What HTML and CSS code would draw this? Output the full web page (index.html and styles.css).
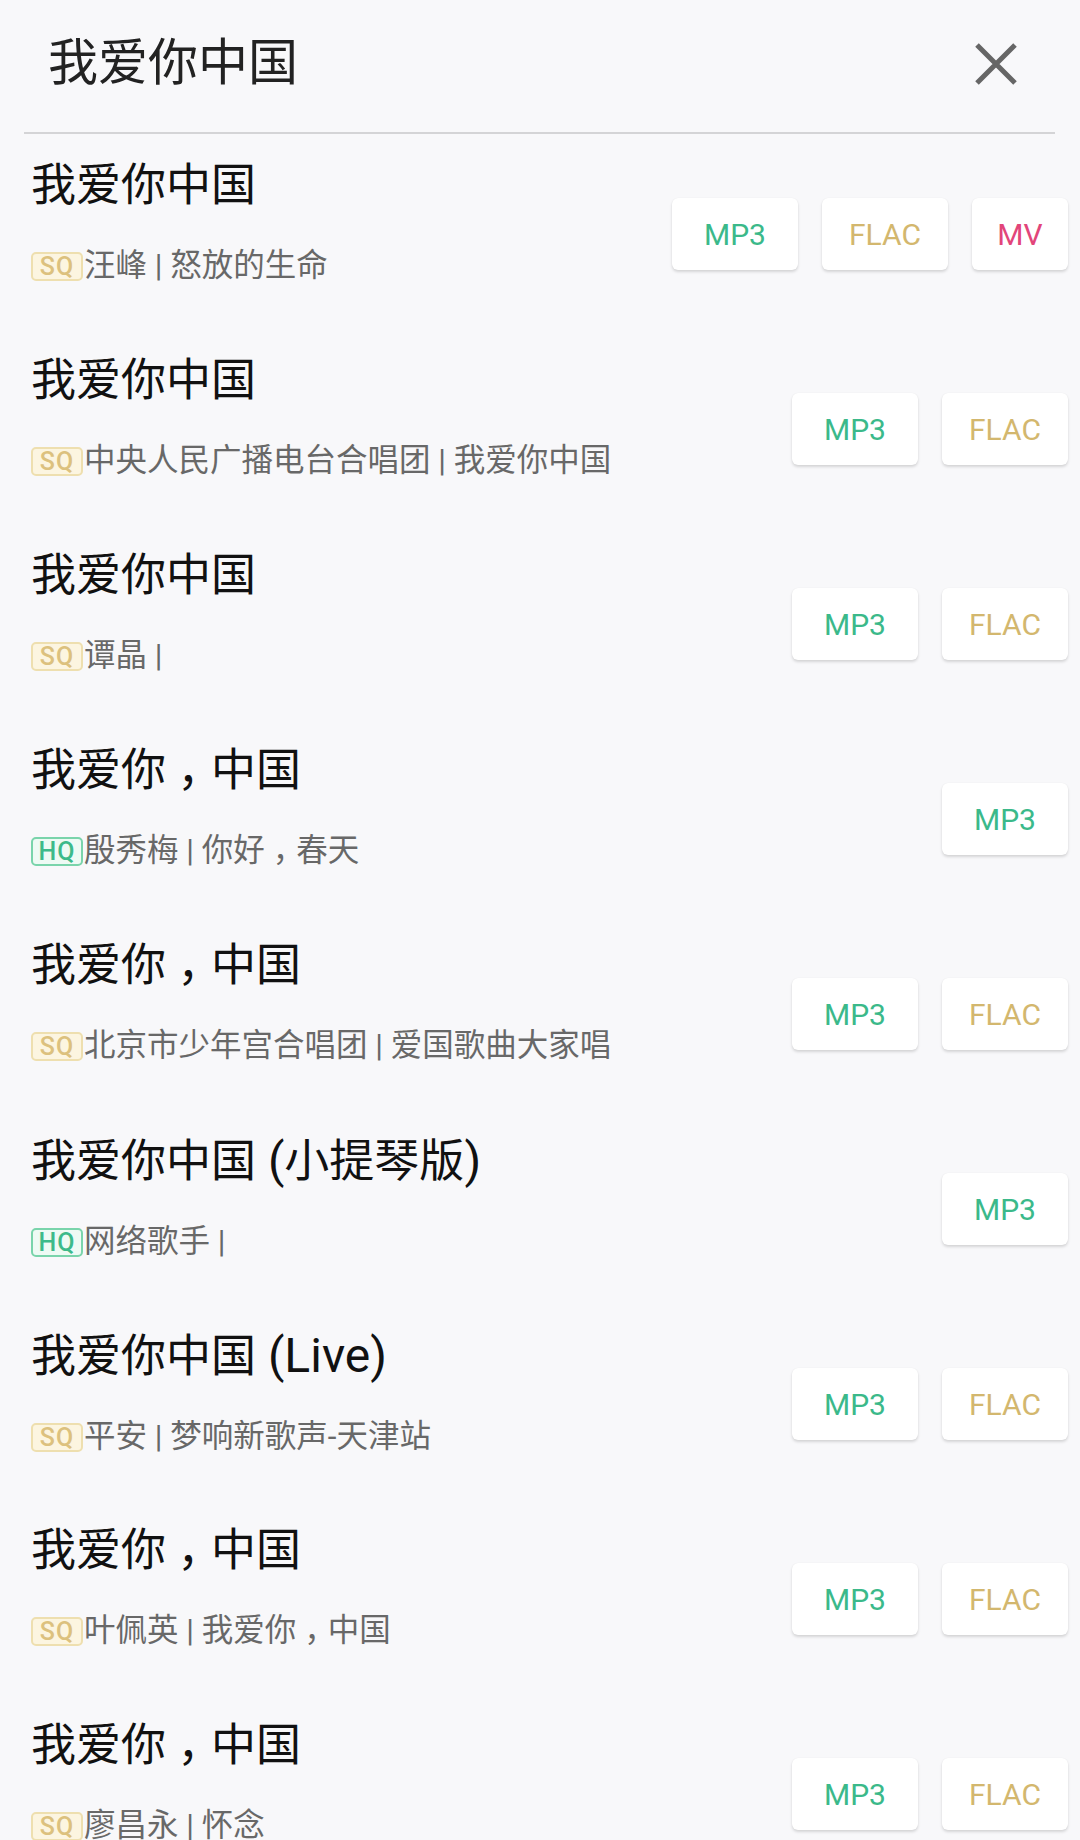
FILE: index.html
```html
<!DOCTYPE html>
<html lang="zh-CN">
<head>
<meta charset="utf-8">
<title>我爱你中国</title>
<link rel="stylesheet" href="styles.css">
</head>
<body>
<div class="page">
  <header class="header">
    <h1 class="header-title">我爱你中国</h1>
    <button class="close" aria-label="关闭">
      <svg width="44" height="44" viewBox="0 0 44 44"><path d="M3 3 L41 41 M41 3 L3 41" stroke="#666" stroke-width="5" stroke-linecap="butt" fill="none"/></svg>
    </button>
  </header>
  <div class="divider"></div>
  <ul class="list">
    <li class="row">
      <div class="info">
        <div class="title">我爱你中国</div>
        <div class="sub"><span class="badge sq">SQ</span><span class="meta">汪峰 | 怒放的生命</span></div>
      </div>
      <div class="btns"><span class="btn mp3">MP3</span><span class="btn flac">FLAC</span><span class="btn mv">MV</span></div>
    </li>
    <li class="row">
      <div class="info">
        <div class="title">我爱你中国</div>
        <div class="sub"><span class="badge sq">SQ</span><span class="meta">中央人民广播电台合唱团 | 我爱你中国</span></div>
      </div>
      <div class="btns"><span class="btn mp3">MP3</span><span class="btn flac">FLAC</span></div>
    </li>
    <li class="row">
      <div class="info">
        <div class="title">我爱你中国</div>
        <div class="sub"><span class="badge sq">SQ</span><span class="meta">谭晶 |</span></div>
      </div>
      <div class="btns"><span class="btn mp3">MP3</span><span class="btn flac">FLAC</span></div>
    </li>
    <li class="row">
      <div class="info">
        <div class="title">我爱你<span class="punct">，</span>中国</div>
        <div class="sub"><span class="badge hq">HQ</span><span class="meta">殷秀梅 | 你好<span class="punct">，</span>春天</span></div>
      </div>
      <div class="btns"><span class="btn mp3">MP3</span></div>
    </li>
    <li class="row">
      <div class="info">
        <div class="title">我爱你<span class="punct">，</span>中国</div>
        <div class="sub"><span class="badge sq">SQ</span><span class="meta">北京市少年宫合唱团 | 爱国歌曲大家唱</span></div>
      </div>
      <div class="btns"><span class="btn mp3">MP3</span><span class="btn flac">FLAC</span></div>
    </li>
    <li class="row">
      <div class="info">
        <div class="title">我爱你中国<span class="en"> (</span>小提琴版<span class="en">)</span></div>
        <div class="sub"><span class="badge hq">HQ</span><span class="meta">网络歌手 |</span></div>
      </div>
      <div class="btns"><span class="btn mp3">MP3</span></div>
    </li>
    <li class="row">
      <div class="info">
        <div class="title">我爱你中国<span class="en"> (Live)</span></div>
        <div class="sub"><span class="badge sq">SQ</span><span class="meta">平安 | 梦响新歌声-天津站</span></div>
      </div>
      <div class="btns"><span class="btn mp3">MP3</span><span class="btn flac">FLAC</span></div>
    </li>
    <li class="row">
      <div class="info">
        <div class="title">我爱你<span class="punct">，</span>中国</div>
        <div class="sub"><span class="badge sq">SQ</span><span class="meta">叶佩英 | 我爱你<span class="punct">，</span>中国</span></div>
      </div>
      <div class="btns"><span class="btn mp3">MP3</span><span class="btn flac">FLAC</span></div>
    </li>
    <li class="row">
      <div class="info">
        <div class="title">我爱你<span class="punct">，</span>中国</div>
        <div class="sub"><span class="badge sq">SQ</span><span class="meta">廖昌永 | 怀念</span></div>
      </div>
      <div class="btns"><span class="btn mp3">MP3</span><span class="btn flac">FLAC</span></div>
    </li>
  </ul>
</div>
</body>
</html>
```

FILE: styles.css
```css
html, body {
  margin: 0;
  padding: 0;
  background: #f8f8fa;
}
body {
  font-family: "Roboto", "Noto Sans CJK SC", sans-serif;
  width: 1080px;
  height: 1840px;
  overflow: hidden;
}
.page {
  display: flex;
  flex-direction: column;
}
.header {
  height: 132px;
  display: flex;
  align-items: center;
  justify-content: space-between;
  padding: 0 62px 5px 48px;
  box-sizing: border-box;
}
.header-title {
  margin: 0 0 1px 0;
  font-size: 50px;
  font-weight: 400;
  color: #222;
  line-height: 60px;
}
.close {
  border: 0;
  background: none;
  padding: 0;
  width: 44px;
  height: 44px;
  display: flex;
}
.divider {
  height: 2px;
  background: #d4d4d6;
  margin: 0 25px 0 24px;
}
.list {
  list-style: none;
  margin: 0;
  padding: 4px 0 0 0;
}
.row {
  height: 195px;
  box-sizing: border-box;
  display: flex;
  padding: 20px 12px 0 31px;
}
.info {
  flex: 1;
  display: flex;
  flex-direction: column;
}
.title {
  font-size: 45px;
  line-height: 56px;
  color: #111;
  white-space: pre;
}
.en {
  font-size: 48px;
}
.punct {
  display: inline-block;
  width: 1em;
  padding-left: 0.25em;
  box-sizing: border-box;
  font-feature-settings: "halt" 1;
}
.sub {
  margin-top: 34px;
  display: flex;
  align-items: center;
  height: 36px;
}
.badge {
  box-sizing: border-box;
  width: 52px;
  height: 29px;
  border: 2px solid;
  border-radius: 5px;
  display: flex;
  align-items: center;
  justify-content: center;
  font-family: "Roboto", "Liberation Sans", sans-serif;
  font-weight: 500;
  font-size: 25px;
  letter-spacing: 1px;
  margin-right: 1px;
  flex-shrink: 0;
}
.badge.sq {
  color: #dcc17e;
  background: #fcf5e0;
  border-color: #eedfaf;
}
.badge.hq {
  color: #3dba8a;
  background: #eefaf4;
  border-color: #7ad4ab;
}
.meta {
  font-size: 31.5px;
  color: #686868;
  line-height: 36px;
  white-space: pre;
}
.btns {
  display: flex;
  gap: 24px;
  margin-top: 40px;
  align-self: flex-start;
}
.btn {
  width: 126px;
  height: 72px;
  box-sizing: border-box;
  background: #fff;
  border-radius: 6px;
  box-shadow: 0 2px 3px rgba(0, 0, 0, 0.14), 0 0 1px rgba(0, 0, 0, 0.08);
  display: flex;
  align-items: center;
  justify-content: center;
  font-family: "Roboto", "Liberation Sans", sans-serif;
  font-size: 30px;
}
.btn.mv {
  width: 96px;
}
.mp3 { color: #3bb98a; }
.flac { color: #d3b76e; }
.mv { color: #e2457a; }
```
